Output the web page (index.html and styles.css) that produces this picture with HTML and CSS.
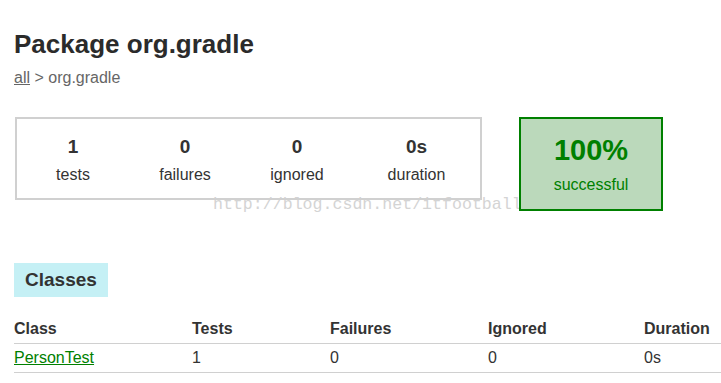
FILE: index.html
```
<!DOCTYPE html>
<html lang="en">

<head>
    <meta charset="UTF-8">
    <title>Test results - Package org.gradle</title>
    <link rel="stylesheet" href="styles.css">
</head>

<body>
    <div id="content">
        <h1>Package org.gradle</h1>
        <div class="breadcrumbs">
            <a href="#">all</a> &gt; org.gradle
        </div>
        <div id="summary">
            <div class="summaryGroup">
                <div class="infoBox" id="tests">
                    <div class="counter">1</div>
                    <p>tests</p>
                </div>
                <div class="infoBox" id="failures">
                    <div class="counter">0</div>
                    <p>failures</p>
                </div>
                <div class="infoBox" id="ignored">
                    <div class="counter">0</div>
                    <p>ignored</p>
                </div>
                <div class="infoBox" id="duration">
                    <div class="counter">0s</div>
                    <p>duration</p>
                </div>
            </div>
            <div class="infoBox success" id="successRate">
                <div class="percent">100%</div>
                <p>successful</p>
            </div>
            <span class="watermark">http://blog.csdn.net/itfootball</span>
        </div>
        <ul class="tabLinks">
            <li class="selected">Classes</li>
        </ul>
        <table class="classes">
            <thead>
                <tr>
                    <th class="col-class">Class</th>
                    <th class="col-tests">Tests</th>
                    <th class="col-fail">Failures</th>
                    <th class="col-ign">Ignored</th>
                    <th>Duration</th>
                </tr>
            </thead>
            <tbody>
                <tr>
                    <td class="success"><a href="#">PersonTest</a></td>
                    <td>1</td>
                    <td>0</td>
                    <td>0</td>
                    <td>0s</td>
                </tr>
            </tbody>
        </table>
    </div>
</body>

</html>
```

FILE: styles.css
```
* {
    margin: 0;
    padding: 0;
}

body {
    font-family: "Liberation Sans", Arial, sans-serif;
    font-size: 16px;
    color: #333333;
    overflow: hidden;
}

#content {
    padding: 28px 0 0 14px;
}

h1 {
    font-size: 26px;
    font-weight: bold;
    color: #2b2b2b;
    line-height: 32px;
}

.breadcrumbs {
    margin-top: 9px;
    color: #666666;
    line-height: 18px;
}

.breadcrumbs a {
    color: #666666;
}

#summary {
    position: relative;
    display: flex;
    align-items: flex-start;
    margin-top: 30px;
    margin-left: 1px;
}

.summaryGroup {
    display: flex;
    border: solid 2px #d0d0d0;
    width: 463px;
    height: 79px;
    position: relative;
    z-index: 1;
}

.infoBox {
    width: 112px;
    padding-top: 17px;
    text-align: center;
}

.infoBox p {
    line-height: 18px;
}

#duration {
    width: 127px;
}

.counter {
    font-size: 19px;
    font-weight: bold;
    line-height: 22px;
    margin-bottom: 8px;
}

#successRate {
    width: 140px;
    height: 90px;
    margin-left: 37px;
    padding-top: 0;
    border: solid 2px #008000;
    background-color: #bbd9bb;
    color: #008000;
    position: relative;
    z-index: 1;
}

#successRate .percent {
    font-size: 29px;
    font-weight: bold;
    line-height: 34px;
    margin-top: 14px;
    margin-bottom: 9px;
}

.watermark {
    position: absolute;
    left: 198px;
    top: 78px;
    font-family: "Liberation Mono", monospace;
    font-size: 16.6px;
    color: #d4d4d4;
    white-space: nowrap;
}

.tabLinks {
    list-style: none;
    margin-top: 52px;
}

.tabLinks li {
    display: inline-block;
    background-color: #c5f0f5;
    font-size: 19px;
    font-weight: bold;
    padding: 6px 11px 6px 11px;
    line-height: 22px;
}

.classes {
    border-collapse: collapse;
    width: 720px;
    margin-top: 21px;
}

.classes th,
.classes td {
    text-align: left;
    padding: 0;
    border-bottom: solid 1px #d0d0d0;
}

.classes th {
    font-weight: bold;
    line-height: 22px;
    padding-top: 0;
    padding-bottom: 3px;
}

.classes td {
    line-height: 20px;
    padding-top: 4px;
    padding-bottom: 4px;
}

.col-class {
    width: 178px;
}

.col-tests {
    width: 138px;
}

.col-fail {
    width: 158px;
}

.col-ign {
    width: 156px;
}

.success a {
    color: #008000;
}
```
